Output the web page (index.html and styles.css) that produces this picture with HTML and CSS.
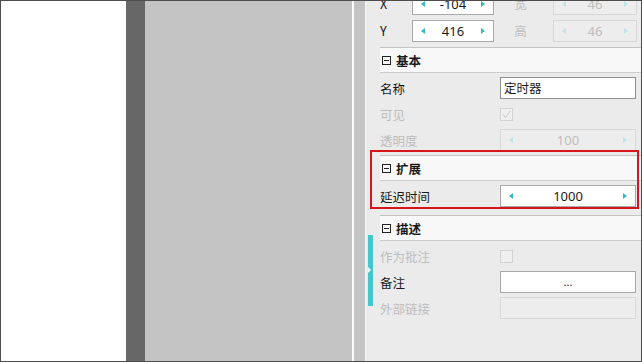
FILE: index.html
```html
<!DOCTYPE html>
<html>
<head>
<title>属性</title>
<link rel="stylesheet" href="styles.css">
</head>
<body>

<div class="frame">
	<div class="canvas"></div>
	<div class="ruler"></div>
	<div class="stage"></div>
	<div class="split"></div>

	<aside class="panel">
		<div class="handle"><span class="handle-tip"></span></div>

		<div class="scroll">
			<div class="pos-row">
				<label>X</label>
				<div class="box spin"><i class="arrow left"></i><span class="val">-104</span><i class="arrow right"></i></div>
				<label class="mid off">宽</label>
				<div class="box spin off"><i class="arrow left"></i><span class="val">46</span><i class="arrow right"></i></div>
			</div>
			<div class="pos-row">
				<label>Y</label>
				<div class="box spin"><i class="arrow left"></i><span class="val">416</span><i class="arrow right"></i></div>
				<label class="mid off">高</label>
				<div class="box spin off"><i class="arrow left"></i><span class="val">46</span><i class="arrow right"></i></div>
			</div>

			<section class="sec">
				<div class="sec-head">
					<svg class="fold" width="9" height="9" viewBox="0 0 9 9"><rect x="0.5" y="0.5" width="8" height="8" fill="none" stroke="#222"/><line x1="2" y1="4.5" x2="7" y2="4.5" stroke="#222"/></svg>
					<span>基本</span>
				</div>
				<div class="rows">
					<div class="row">
						<label>名称</label>
						<div class="box text">定时器</div>
					</div>
					<div class="row">
						<label class="off">可见</label>
						<div class="check">
							<svg width="13" height="13" viewBox="0 0 13 13"><rect x="0.5" y="0.5" width="12" height="12" fill="#efefef" stroke="#d2d2d2"/><polyline points="3,6.5 5.5,9.5 10.5,3" fill="none" stroke="#c9c9c9" stroke-width="1"/></svg>
						</div>
					</div>
					<div class="row">
						<label class="off">透明度</label>
						<div class="box spin off"><i class="arrow left"></i><span class="val">100</span><i class="arrow right"></i></div>
					</div>
				</div>
			</section>

			<section class="sec ext">
				<div class="sec-head">
					<svg class="fold" width="9" height="9" viewBox="0 0 9 9"><rect x="0.5" y="0.5" width="8" height="8" fill="none" stroke="#222"/><line x1="2" y1="4.5" x2="7" y2="4.5" stroke="#222"/></svg>
					<span>扩展</span>
				</div>
				<div class="rows">
					<div class="row">
						<label>延迟时间</label>
						<div class="box spin"><i class="arrow left"></i><span class="val">1000</span><i class="arrow right"></i></div>
					</div>
				</div>
			</section>

			<section class="sec">
				<div class="sec-head">
					<svg class="fold" width="9" height="9" viewBox="0 0 9 9"><rect x="0.5" y="0.5" width="8" height="8" fill="none" stroke="#222"/><line x1="2" y1="4.5" x2="7" y2="4.5" stroke="#222"/></svg>
					<span>描述</span>
				</div>
				<div class="rows">
					<div class="row">
						<label class="off">作为批注</label>
						<div class="check">
							<svg width="13" height="13" viewBox="0 0 13 13"><rect x="0.5" y="0.5" width="12" height="12" fill="#efefef" stroke="#d2d2d2"/></svg>
						</div>
					</div>
					<div class="row">
						<label>备注</label>
						<div class="box dots">...</div>
					</div>
					<div class="row">
						<label class="off">外部链接</label>
						<div class="box off"></div>
					</div>
				</div>
			</section>
		</div>
	</aside>
</div>

</body>
</html>
```

FILE: styles.css
```css
body {
	margin: 0;
	font-family: 'Noto Sans CJK SC', 'Noto Sans', sans-serif;
	font-size: 12.5px;
	color: #1a1a1a;
}

.frame {
	display: flex;
	width: 642px;
	height: 362px;
	box-sizing: border-box;
	border: 1px solid #4d4d4d;
	overflow: hidden;
}

.canvas {
	width: 125px;
	background: #fff;
}

.ruler {
	width: 19px;
	background: #676767;
}

.stage {
	width: 207px;
	background: #c4c4c4;
}

.split {
	width: 14px;
	box-sizing: border-box;
	border-left: 2px solid #fbfbfb;
	border-right: 1px solid #f6f6f6;
	background: #c4c4c4;
}

.panel {
	flex: 1;
	position: relative;
	padding-left: 14px;
	background: #ebebeb;
	overflow: hidden;
}

/* collapse handle that sits over the panel edge */
.handle {
	position: absolute;
	left: 2px;
	top: 234px;
	width: 5px;
	height: 71px;
	background: #46c6cc;
	z-index: 2;
}

.handle-tip {
	position: absolute;
	left: 0;
	top: 32px;
	width: 0;
	height: 0;
	border-top: 3px solid transparent;
	border-bottom: 3px solid transparent;
	border-left: 3px solid #e8fafa;
}

.scroll {
	margin-top: -11px;
}

.pos-row {
	display: grid;
	grid-template-columns: 32px 82px 59px 84px;
	height: 27px;
	align-items: center;
}

.pos-row:nth-child(2) {
	margin-bottom: 3px;
}

label {
	white-space: nowrap;
}

label.mid {
	text-align: center;
	padding-right: 6px;
}

.off {
	color: #bdbdbd;
}

.box {
	height: 22px;
	box-sizing: border-box;
	border: 1px solid #a9a9a9;
	background: #fff;
}

.box.off {
	border-color: #d7d7d7;
	background: #ededed;
}

.spin {
	display: flex;
	align-items: center;
	justify-content: space-between;
	padding: 0 8px;
}

.val {
	font-family: 'Noto Sans', 'Noto Sans CJK SC', sans-serif;
	font-size: 13px;
	line-height: 20px;
}

.arrow {
	width: 0;
	height: 0;
	border-top: 3.5px solid transparent;
	border-bottom: 3.5px solid transparent;
}

.arrow.left {
	border-right: 4px solid #33b8c4;
}

.arrow.right {
	border-left: 4px solid #33b8c4;
}

.off .arrow.left {
	border-right-color: #bfe3e6;
}

.off .arrow.right {
	border-left-color: #bfe3e6;
}

.box.text {
	padding-left: 3px;
	line-height: 20px;
	border-color: #8f8f8f;
}

.box.dots {
	text-align: center;
	line-height: 20px;
	font-family: 'Noto Sans', sans-serif;
	font-size: 11px;
}

.check {
	display: flex;
	align-items: center;
}

.check svg {
	display: block;
}

.sec {
	position: relative;
}

.sec-head {
	display: flex;
	align-items: center;
	gap: 5px;
	height: 26px;
	box-sizing: border-box;
	padding-left: 2px;
	border-top: 1px solid #c4c4c4;
	border-bottom: 1px solid #cdcdcd;
	background: #f8f8f8;
	font-weight: bold;
	font-size: 12.5px;
}

.fold {
	display: block;
}

.rows {
	padding: 2px 5px 2px 0;
}

.row {
	display: grid;
	grid-template-columns: 120px 136px;
	height: 26px;
	align-items: center;
}

.ext {
	margin-bottom: 4px;
}

/* red highlight drawn over the extension group */
.ext::after {
	content: "";
	position: absolute;
	top: -5px;
	left: -10px;
	right: 2px;
	bottom: 2px;
	border: 2px solid #d8141c;
	pointer-events: none;
}
```
